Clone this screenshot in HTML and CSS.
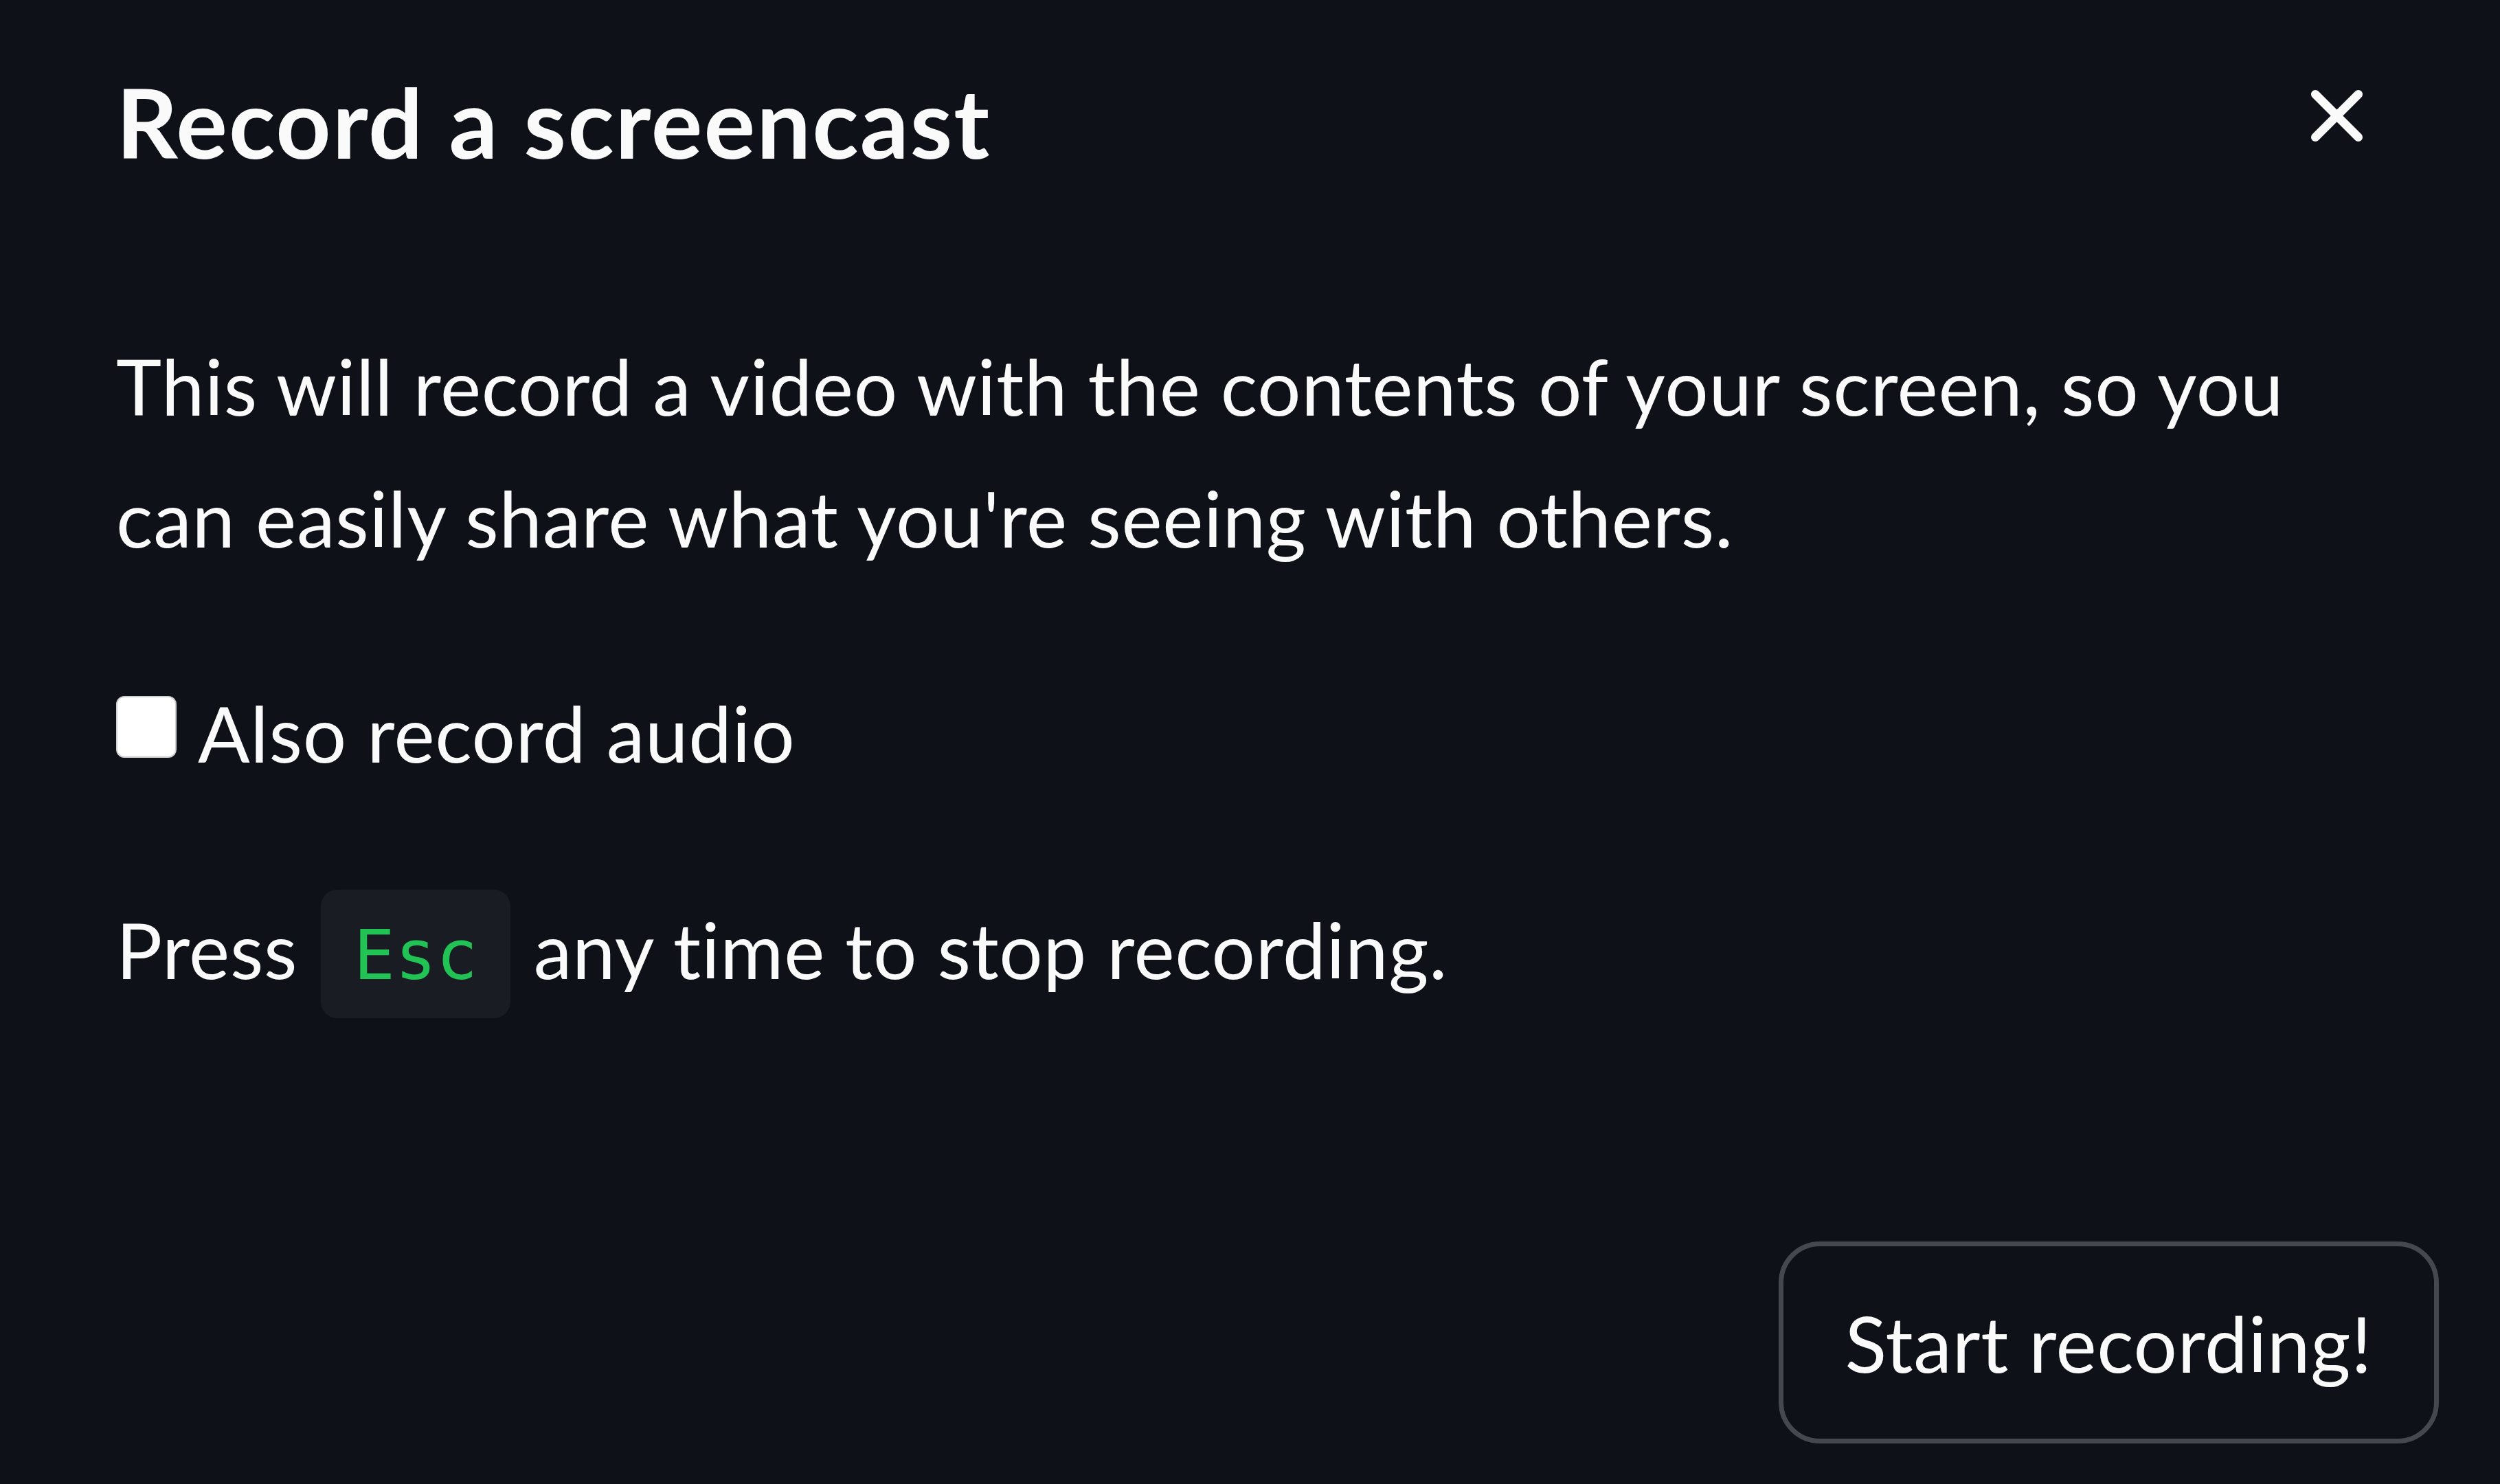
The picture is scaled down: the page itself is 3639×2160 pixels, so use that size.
FILE: index.html
```html
<!DOCTYPE html>
<html lang="en">
<head>
<meta charset="utf-8">
<title>Record a screencast</title>
<link rel="stylesheet" href="styles.css">
</head>
<body>
<div class="dialog">
  <div class="header">
    <h2 class="title">Record a screencast</h2>
    <button class="close" aria-label="Close">
      <svg width="77" height="77" viewBox="0 0 16 16"><path d="M1.5 1.5 L14.5 14.5 M14.5 1.5 L1.5 14.5" stroke="#fafafa" stroke-width="2.6" stroke-linecap="round" fill="none"/></svg>
    </button>
  </div>
  <p class="text">This will record a video with the contents of your screen, so you can easily share what you're seeing with others.</p>
  <label class="check-row"><span class="box"></span><span>Also record audio</span></label>
  <p class="press">Press <code class="kbd">Esc</code> any time to stop recording.</p>
  <div class="footer">
    <button class="start">Start recording!</button>
  </div>
</div>
</body>
</html>
```
FILE: styles.css
```css
html, body {
  margin: 0;
  padding: 0;
  background: #0e1117;
}
body {
  width: 3639px;
  height: 2160px;
  overflow: hidden;
  font-family: Lato, "Liberation Sans", sans-serif;
  color: #fafafa;
}
.dialog {
  padding: 95px 89px 0 169px;
  display: flex;
  flex-direction: column;
}
.header {
  display: flex;
  justify-content: space-between;
  align-items: flex-start;
}
.title {
  margin: 0;
  font-size: 140px;
  line-height: 164px;
  font-weight: 700;
  letter-spacing: 2px;
}
.close {
  margin: 35px 110px 0 0;
  padding: 0;
  border: 0;
  background: none;
  width: 77px;
  height: 77px;
  display: flex;
}
.text {
  margin: 207px 0 0 0;
  font-size: 112px;
  line-height: 192px;
  letter-spacing: 0.7px;
  width: 3250px;
}
.check-row {
  margin-top: 121px;
  display: flex;
  align-items: flex-start;
  gap: 31px;
  font-size: 112px;
  line-height: 192px;
  letter-spacing: 0.7px;
}
.box {
  margin-top: 42px;
  width: 84px;
  height: 86px;
  background: #ffffff;
  border: 2px solid #cfcfcf;
  border-radius: 12px;
}
.press {
  margin: 123px 0 0 0;
  font-size: 112px;
  line-height: 192px;
  letter-spacing: 0.7px;
}
.kbd {
  display: inline-block;
  font-family: "DejaVu Sans Mono", "Liberation Mono", monospace;
  font-size: 100px;
  line-height: 120px;
  letter-spacing: 0;
  padding: 36px 48px 31px;
  background: #1a1c24;
  color: #21c354;
  border-radius: 24px;
  margin: 0 4px;
}
.footer {
  margin-top: 325px;
  display: flex;
  justify-content: flex-end;
}
.start {
  height: 294px;
  padding: 0 90px;
  background: #0e1117;
  border: 7px solid #45484f;
  border-radius: 60px;
  color: #fafafa;
  font-family: Lato, "Liberation Sans", sans-serif;
  font-size: 112px;
  letter-spacing: 0.7px;
}
```
